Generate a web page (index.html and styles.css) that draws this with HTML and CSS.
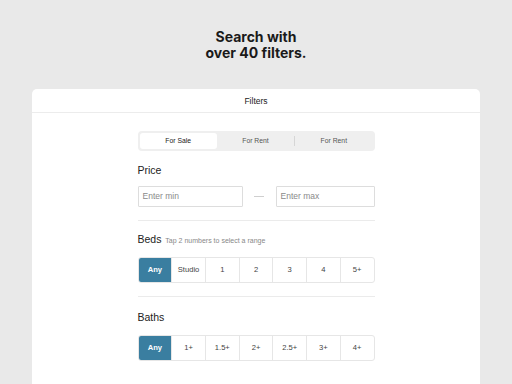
FILE: index.html
```html
<!DOCTYPE html>
<html>
<head>
<meta charset="utf-8">
<link rel="stylesheet" href="styles.css">
</head>
<body>
<h1 class="title">Search with<br>over 40 filters.</h1>
<div class="card">
  <div class="card-header">Filters</div>
  <div class="content">
    <div class="segmented">
      <div class="seg active">For Sale</div>
      <div class="seg">For Rent</div>
      <div class="sep"></div>
      <div class="seg">For Rent</div>
    </div>
    <div class="label">Price</div>
    <div class="price-row">
      <div class="input input-min">Enter min</div>
      <div class="dash"></div>
      <div class="input input-max">Enter max</div>
    </div>
    <div class="divider"></div>
    <div class="label beds-label">Beds <span class="hint">Tap 2 numbers to select a range</span></div>
    <div class="choices">
      <div class="choice active">Any</div>
      <div class="choice">Studio</div>
      <div class="choice">1</div>
      <div class="choice">2</div>
      <div class="choice">3</div>
      <div class="choice">4</div>
      <div class="choice">5+</div>
    </div>
    <div class="divider"></div>
    <div class="label baths-label">Baths</div>
    <div class="choices">
      <div class="choice active">Any</div>
      <div class="choice">1+</div>
      <div class="choice">1.5+</div>
      <div class="choice">2+</div>
      <div class="choice">2.5+</div>
      <div class="choice">3+</div>
      <div class="choice">4+</div>
    </div>
  </div>
</div>
</body>
</html>
```

FILE: styles.css
```css
html, body {
  margin: 0;
  padding: 0;
  height: 384px;
  overflow: hidden;
  background: #e9e9e9;
  font-family: "Liberation Sans", Arial, sans-serif;
  color: #222;
}
.title {
  margin: 0;
  padding-top: 29px;
  height: 89px;
  box-sizing: border-box;
  text-align: center;
  font-family: Inter, "Open Sans", sans-serif;
  font-weight: 700;
  font-size: 14px;
  line-height: 16px;
  color: #1a1a1a;
}
.card {
  margin: 0 32px;
  background: #fff;
  border-radius: 5px 5px 0 0;
  height: 295px;
}
.card-header {
  height: 24px;
  border-bottom: 1px solid #ececec;
  box-sizing: border-box;
  text-align: center;
  font-size: 8.5px;
  line-height: 24px;
  color: #222;
}
.content {
  width: 237px;
  margin: 0 auto;
  padding-top: 18px;
}
.segmented {
  display: flex;
  align-items: center;
  height: 20px;
  background: #efefef;
  border-radius: 4px;
  padding: 2px;
  box-sizing: border-box;
}
.seg {
  flex: 1;
  height: 16px;
  line-height: 16px;
  text-align: center;
  font-size: 6.8px;
  color: #555;
  border-radius: 3px;
}
.seg.active {
  background: #fff;
  color: #222;
}
.sep {
  width: 1px;
  height: 10px;
  background: #d6d6d6;
}
.label {
  font-size: 10.5px;
  margin-top: 14px;
  height: 11px;
  line-height: 11px;
  color: #222;
}
.price-row {
  display: flex;
  align-items: center;
  margin-top: 10px;
}
.input {
  height: 21px;
  box-sizing: border-box;
  border: 1px solid #ddd;
  border-radius: 1px;
  padding-left: 4px;
  font-size: 8.5px;
  line-height: 19px;
  color: #8a8a8a;
}
.input-min {
  width: 105px;
}
.input-max {
  width: 99px;
}
.dash {
  flex: 1;
  display: flex;
  justify-content: center;
}
.dash::before {
  content: "";
  width: 10px;
  height: 1px;
  background: #cfcfcf;
}
.divider {
  height: 1px;
  background: #ebebeb;
  margin-top: 13px;
}
.beds-label {
  margin-top: 13px;
}
.hint {
  font-size: 7px;
  color: #888;
  margin-left: 1px;
}
.baths-label {
  margin-top: 15px;
}
.choices {
  display: flex;
  margin-top: 12px;
  height: 26px;
  border: 1px solid #e6e6e6;
  border-radius: 3px;
  box-sizing: border-box;
  overflow: hidden;
}
.choice {
  flex: 1;
  text-align: center;
  font-size: 7.6px;
  line-height: 24px;
  color: #444;
  border-left: 1px solid #e6e6e6;
}
.choice:first-child {
  border-left: none;
}
.choice.active {
  background: #3a7ea0;
  color: #fff;
  font-weight: 700;
}
```
